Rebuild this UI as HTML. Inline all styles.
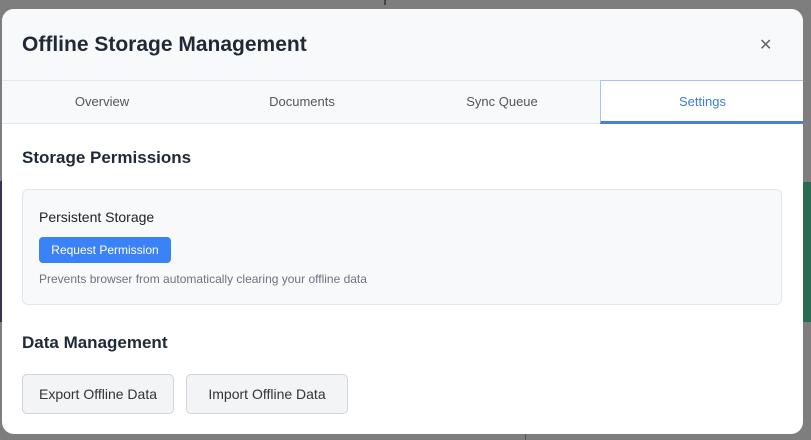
<!DOCTYPE html>
<html><head><style>
*{box-sizing:border-box;margin:0;padding:0}
body{width:811px;height:440px;background:#7e7e7e;font-family:"Liberation Sans",sans-serif;position:relative;overflow:hidden}
.ps{position:absolute;left:0;top:181px;width:3px;height:141px;background:#3b2f5c}
.gs{position:absolute;left:800px;top:182px;width:11px;height:140px;background:#2a6b52}
.tl{position:absolute;left:384px;top:0;width:2px;height:5px;background:#444}
.bl{position:absolute;left:525px;top:432px;width:1px;height:8px;background:#555}
.modal{position:absolute;left:2px;top:9px;width:801px;height:425px;background:#fff;border-radius:12px;overflow:hidden}
.hdr{height:72px;background:#f8f9fa;border-bottom:1px solid #e3e6ea;position:relative}
.hdr h1{position:absolute;left:20px;top:24px;font-size:21px;font-weight:600;color:#1f2937}
.x{position:absolute;left:757px;top:26px;font-size:16px;color:#666}
.tabs{height:43px;background:#f8f9fa;border-bottom:1px solid #e3e6ea;display:flex;position:relative}
.tab{width:200px;text-align:center;line-height:42px;font-size:13px;color:#555}
.tab.a{position:absolute;left:598px;top:-1px;width:205px;height:44px;background:#fff;border:1px solid #a9c4ec;border-bottom:3px solid #4a7fd6;color:#3b7ddd;line-height:42px}
h2{position:absolute;left:22px;font-size:17px;font-weight:600;color:#1f2937}
.card{position:absolute;left:22px;top:189px;width:760px;height:116px;background:#f8f9fa;border:1px solid #e3e6ea;border-radius:6px}
.card .t{position:absolute;left:16px;top:19px;font-size:14px;color:#222}
.btn{position:absolute;left:16px;top:47px;width:132px;height:26px;background:#3b82f6;color:#fff;border-radius:4px;font-size:12px;text-align:center;line-height:26px}
.card .d{position:absolute;left:16px;top:82px;font-size:12px;color:#6b7280}
.gb{position:absolute;top:374px;height:40px;background:#f3f4f6;border:1px solid #d1d5db;border-radius:5px;font-size:14px;color:#333;text-align:center;line-height:38px}
</style></head><body>
<div class="tl"></div><div class="ps"></div><div class="gs"></div><div class="bl"></div>
<div class="modal">
<div class="hdr"><h1>Offline Storage Management</h1><div class="x">✕</div></div>
<div class="tabs"><div class="tab">Overview</div><div class="tab">Documents</div><div class="tab">Sync Queue</div><div class="tab a">Settings</div></div>
</div>
<h2 style="top:148px">Storage Permissions</h2>
<div class="card"><div class="t">Persistent Storage</div><div class="btn">Request Permission</div><div class="d">Prevents browser from automatically clearing your offline data</div></div>
<h2 style="top:333px">Data Management</h2>
<div class="gb" style="left:22px;width:152px">Export Offline Data</div>
<div class="gb" style="left:186px;width:162px">Import Offline Data</div>
</body></html>
